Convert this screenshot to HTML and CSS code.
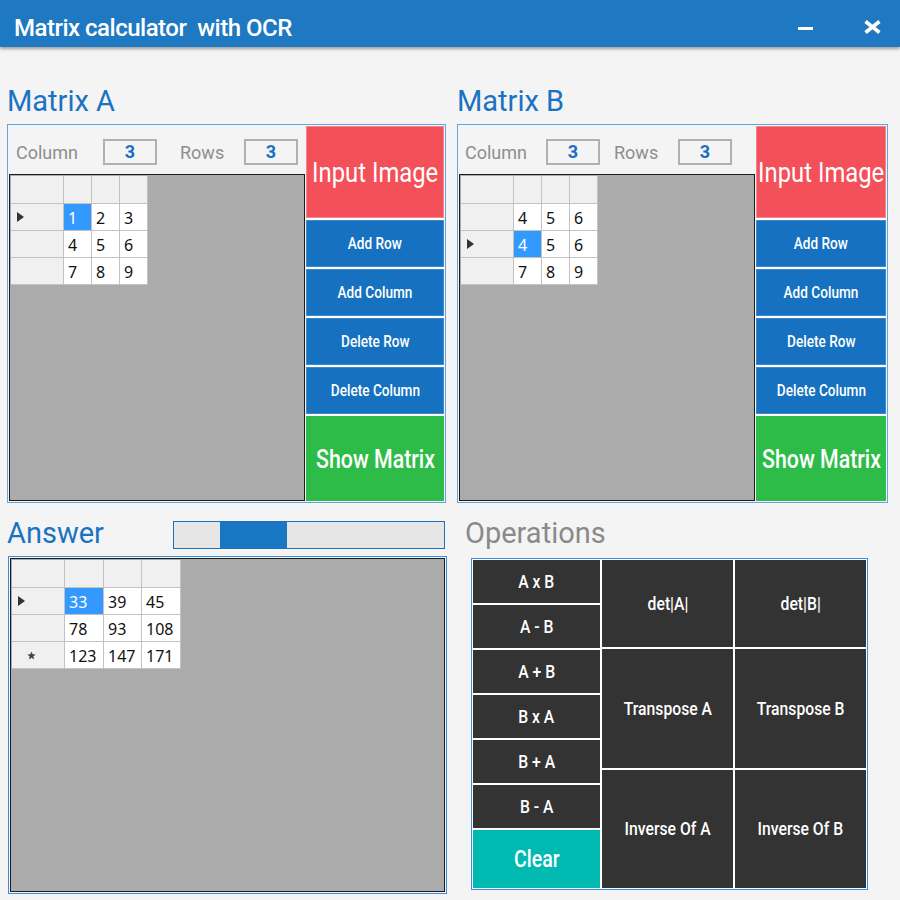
FILE: index.html
```html
<!DOCTYPE html>
<html>
<head>
<meta charset="utf-8">
<title>Matrix calculator with OCR</title>
<link rel="stylesheet" href="styles.css">
</head>
<body>
<header class="titlebar">
  <span class="title">Matrix calculator&nbsp; with OCR</span>
  <div class="win-controls">
    <span class="win-min"></span>
    <svg class="win-close" width="19" height="14" viewBox="0 0 19 14"><path d="M2.5 1.5 L16.5 12.5 M16.5 1.5 L2.5 12.5" stroke="#fff" stroke-width="3.6" stroke-linecap="butt"/></svg>
  </div>
</header>

<main class="main">
  <div class="top-row">
    <section class="matrix matrix-a">
      <h2 class="heading">Matrix A</h2>
      <div class="panel">
        <div class="panel-left">
          <div class="dims">
            <span class="dim-label lbl-col">Column</span><span class="dim-box">3</span>
            <span class="dim-label lbl-rows">Rows</span><span class="dim-box">3</span>
          </div>
          <div class="gridview">
            <div class="dgv dgv-small">
              <div class="hd"></div><div class="hd"></div><div class="hd"></div><div class="hd"></div>
              <div class="rh"><span class="arrow"></span></div><div class="c sel">1</div><div class="c">2</div><div class="c">3</div>
              <div class="rh"></div><div class="c">4</div><div class="c">5</div><div class="c">6</div>
              <div class="rh"></div><div class="c">7</div><div class="c">8</div><div class="c">9</div>
            </div>
          </div>
        </div>
        <div class="btn-col">
          <button class="btn btn-red btn-big"><span class="cond">Input Image</span></button>
          <button class="btn btn-blue btn-sm"><span class="cond">Add Row</span></button>
          <button class="btn btn-blue btn-sm"><span class="cond">Add Column</span></button>
          <button class="btn btn-blue btn-sm"><span class="cond">Delete Row</span></button>
          <button class="btn btn-blue btn-sm"><span class="cond">Delete Column</span></button>
          <button class="btn btn-green btn-show"><span class="cond">Show Matrix</span></button>
        </div>
      </div>
    </section>

    <section class="matrix matrix-b">
      <h2 class="heading">Matrix B</h2>
      <div class="panel">
        <div class="panel-left">
          <div class="dims">
            <span class="dim-label lbl-col">Column</span><span class="dim-box">3</span>
            <span class="dim-label lbl-rows">Rows</span><span class="dim-box">3</span>
          </div>
          <div class="gridview">
            <div class="dgv dgv-small">
              <div class="hd"></div><div class="hd"></div><div class="hd"></div><div class="hd"></div>
              <div class="rh"></div><div class="c">4</div><div class="c">5</div><div class="c">6</div>
              <div class="rh"><span class="arrow"></span></div><div class="c sel">4</div><div class="c">5</div><div class="c">6</div>
              <div class="rh"></div><div class="c">7</div><div class="c">8</div><div class="c">9</div>
            </div>
          </div>
        </div>
        <div class="btn-col">
          <button class="btn btn-red btn-big"><span class="cond">Input Image</span></button>
          <button class="btn btn-blue btn-sm"><span class="cond">Add Row</span></button>
          <button class="btn btn-blue btn-sm"><span class="cond">Add Column</span></button>
          <button class="btn btn-blue btn-sm"><span class="cond">Delete Row</span></button>
          <button class="btn btn-blue btn-sm"><span class="cond">Delete Column</span></button>
          <button class="btn btn-green btn-show"><span class="cond">Show Matrix</span></button>
        </div>
      </div>
    </section>
  </div>

  <div class="bottom-row">
    <section class="answer">
      <div class="answer-head">
        <h2 class="heading">Answer</h2>
        <div class="progress"><div class="progress-fill"></div></div>
      </div>
      <div class="answer-box">
        <div class="gridview answer-grid">
          <div class="dgv dgv-wide">
            <div class="hd"></div><div class="hd"></div><div class="hd"></div><div class="hd"></div>
            <div class="rh"><span class="arrow"></span></div><div class="c sel">33</div><div class="c">39</div><div class="c">45</div>
            <div class="rh"></div><div class="c">78</div><div class="c">93</div><div class="c">108</div>
            <div class="rh"><svg class="star" width="9" height="9" viewBox="0 0 10 10"><polygon points="5,0.5 6.3,3.6 9.6,3.8 7,6 7.9,9.4 5,7.6 2.1,9.4 3,6 0.4,3.8 3.7,3.6" fill="#444"/></svg></div><div class="c">123</div><div class="c">147</div><div class="c">171</div>
          </div>
        </div>
      </div>
    </section>

    <section class="operations">
      <h2 class="heading heading-grey">Operations</h2>
      <div class="ops-panel">
        <div class="ops-left">
          <button class="btn btn-dark btn-op"><span class="cond">A x B</span></button>
          <button class="btn btn-dark btn-op"><span class="cond">A - B</span></button>
          <button class="btn btn-dark btn-op"><span class="cond">A + B</span></button>
          <button class="btn btn-dark btn-op"><span class="cond">B x A</span></button>
          <button class="btn btn-dark btn-op"><span class="cond">B + A</span></button>
          <button class="btn btn-dark btn-op"><span class="cond">B - A</span></button>
          <button class="btn btn-teal btn-clear"><span class="cond">Clear</span></button>
        </div>
        <div class="ops-right">
          <button class="btn btn-dark btn-op"><span class="cond">det|A|</span></button>
          <button class="btn btn-dark btn-op"><span class="cond">det|B|</span></button>
          <button class="btn btn-dark btn-op"><span class="cond">Transpose A</span></button>
          <button class="btn btn-dark btn-op"><span class="cond">Transpose B</span></button>
          <button class="btn btn-dark btn-op"><span class="cond">Inverse Of A</span></button>
          <button class="btn btn-dark btn-op"><span class="cond">Inverse Of B</span></button>
        </div>
      </div>
    </section>
  </div>
</main>
</body>
</html>
```

FILE: styles.css
```css
* { box-sizing: border-box; }

html, body {
  margin: 0;
  padding: 0;
}

body {
  width: 900px;
  height: 900px;
  overflow: hidden;
  background: #f4f4f4;
  font-family: Roboto, "Noto Sans", sans-serif;
}

/* ---------- title bar ---------- */
.titlebar {
  height: 47px;
  background: #1e78c2;
  display: flex;
  justify-content: space-between;
  align-items: flex-start;
  padding: 13px 18px 0 14px;
  box-shadow: 0 2px 3px rgba(0, 0, 0, 0.35);
  position: relative;
  z-index: 1;
}

.title {
  color: #fff;
  font-size: 24px;
  line-height: 30px;
  font-weight: 500;
  letter-spacing: -0.5px;
}

.win-controls {
  display: flex;
  align-items: center;
  gap: 50px;
  padding-top: 7px;
}

.win-min {
  width: 15px;
  height: 3px;
  background: #fff;
  margin-top: 3px;
}

.win-close { display: block; }

/* ---------- main layout ---------- */
.main {
  padding: 37px 0 0 7px;
}

.top-row {
  display: flex;
  gap: 11px;
}

.heading {
  margin: 0 0 6px 0;
  font-size: 29px;
  line-height: 34px;
  font-weight: 400;
  color: #1a73c2;
}

.heading-grey { color: #8a8a8a; }

.matrix-a { width: 439px; }
.matrix-b { width: 431px; }

.panel {
  height: 379px;
  border: 1px solid #62a6df;
  padding: 1px;
  display: flex;
  gap: 1px;
}

.panel-left {
  flex: 1;
  display: flex;
  flex-direction: column;
}

.dims {
  height: 48px;
  display: flex;
  align-items: center;
  padding: 4px 0 0 7px;
}

.matrix-b .dims { padding-left: 6px; }

.dim-label {
  font-size: 18px;
  color: #8e8e8e;
}

.lbl-col { width: 87px; }
.lbl-rows { width: 64px; }
.matrix-b .lbl-col { width: 81px; }

.dim-box {
  width: 54px;
  height: 26px;
  border: 2px solid #b0b0b0;
  background: #f4f4f4;
  color: #1a6fc4;
  font-weight: 700;
  font-size: 18px;
  line-height: 22px;
  text-align: center;
}

.lbl-col + .dim-box { margin-right: 23px; }
.matrix-b .lbl-col + .dim-box { margin-right: 14px; }

/* ---------- data grid ---------- */
.gridview {
  flex: 1;
  border: 1px solid #1c1c1c;
  padding: 1px;
  background: #ababab;
  display: flex;
  align-items: flex-start;
}

.dgv {
  display: grid;
  gap: 1px;
  background: #c2c2c2;
  padding: 0 1px 1px 0;
  font-family: "Noto Sans", "Liberation Sans", sans-serif;
  font-size: 16px;
  color: #111;
}

.dgv-small {
  grid-template-columns: 52px repeat(3, 27px);
  grid-template-rows: 27px repeat(3, 26px);
}

.dgv-wide {
  grid-template-columns: 52px 38px 37px 38px;
  grid-template-rows: 27px repeat(3, 26px);
}

.hd, .rh { background: #f0f0f0; }

.rh {
  display: flex;
  align-items: center;
  padding-left: 6px;
}

.arrow {
  width: 0;
  height: 0;
  border-left: 7px solid #333;
  border-top: 5px solid transparent;
  border-bottom: 5px solid transparent;
}

.star { margin-left: 9px; }

.c {
  background: #fff;
  padding: 2px 0 0 4px;
  line-height: 24px;
}

.c.sel {
  background: #3399ff;
  color: #fff;
}

/* ---------- buttons ---------- */
.btn {
  border: none;
  margin: 0;
  padding: 0;
  color: #fff;
  font-family: Roboto, "Noto Sans", sans-serif;
  display: flex;
  align-items: center;
  justify-content: center;
  white-space: nowrap;
}

.cond {
  display: inline-block;
  transform: scaleX(0.85);
}

.btn-col {
  width: 138px;
  display: flex;
  flex-direction: column;
  gap: 2px;
  background: #fff;
}

.matrix-b .btn-col { width: 130px; }

.btn-red {
  background: #f4505a;
  box-shadow: inset 0 0 0 1px #f7838a;
}

.btn-blue {
  background: #1672c0;
  box-shadow: inset 0 0 0 1px #3b88cc;
}

.btn-green {
  background: #2ebc49;
}

.btn-dark { background: #333333; }
.btn-teal { background: #00b9b1; }

.btn-big {
  height: 92px;
  font-size: 28px;
}

.btn-sm {
  height: 47px;
  font-size: 16px;
  font-weight: 500;
}

.btn-show {
  flex: 1;
  font-size: 26px;
  font-weight: 500;
}

.btn-show .cond { transform: scaleX(0.82); }

/* ---------- bottom row ---------- */
.bottom-row {
  display: flex;
  margin-top: 13px;
}

.answer { width: 440px; }

.answer-head {
  display: flex;
  align-items: flex-start;
  height: 34px;
  margin-bottom: 6px;
}

.answer-head .heading { margin-bottom: 0; }

.progress {
  margin: 5px 2px 0 auto;
  width: 272px;
  height: 28px;
  border: 1px solid #1a73c0;
  background: #e6e6e6;
  display: flex;
}

.progress-fill {
  margin-left: 46px;
  width: 67px;
  background: #1976c2;
}

.answer-box {
  margin-left: 1px;
  width: 439px;
  height: 338px;
  border: 1px solid #3b8ede;
  padding: 1px;
  display: flex;
}

.answer-grid { height: 100%; }

.operations {
  margin-left: 17px;
}

.operations .heading { margin: 0 0 8px 1px; }

.ops-panel {
  margin-left: 7px;
  width: 397px;
  height: 332px;
  border: 1px solid #3b8ede;
  background: #fff;
  padding: 1px;
  display: flex;
  gap: 2px;
}

.ops-left {
  width: 127px;
  display: flex;
  flex-direction: column;
  gap: 2px;
}

.ops-left .btn-op { height: 43px; }

.btn-op {
  font-size: 18.5px;
  font-weight: 500;
}

.btn-clear {
  flex: 1;
  font-size: 23px;
  font-weight: 500;
}

.ops-right {
  flex: 1;
  display: grid;
  grid-template-columns: 131px 131px;
  grid-template-rows: 87px 119px 118px;
  gap: 2px;
}
```
